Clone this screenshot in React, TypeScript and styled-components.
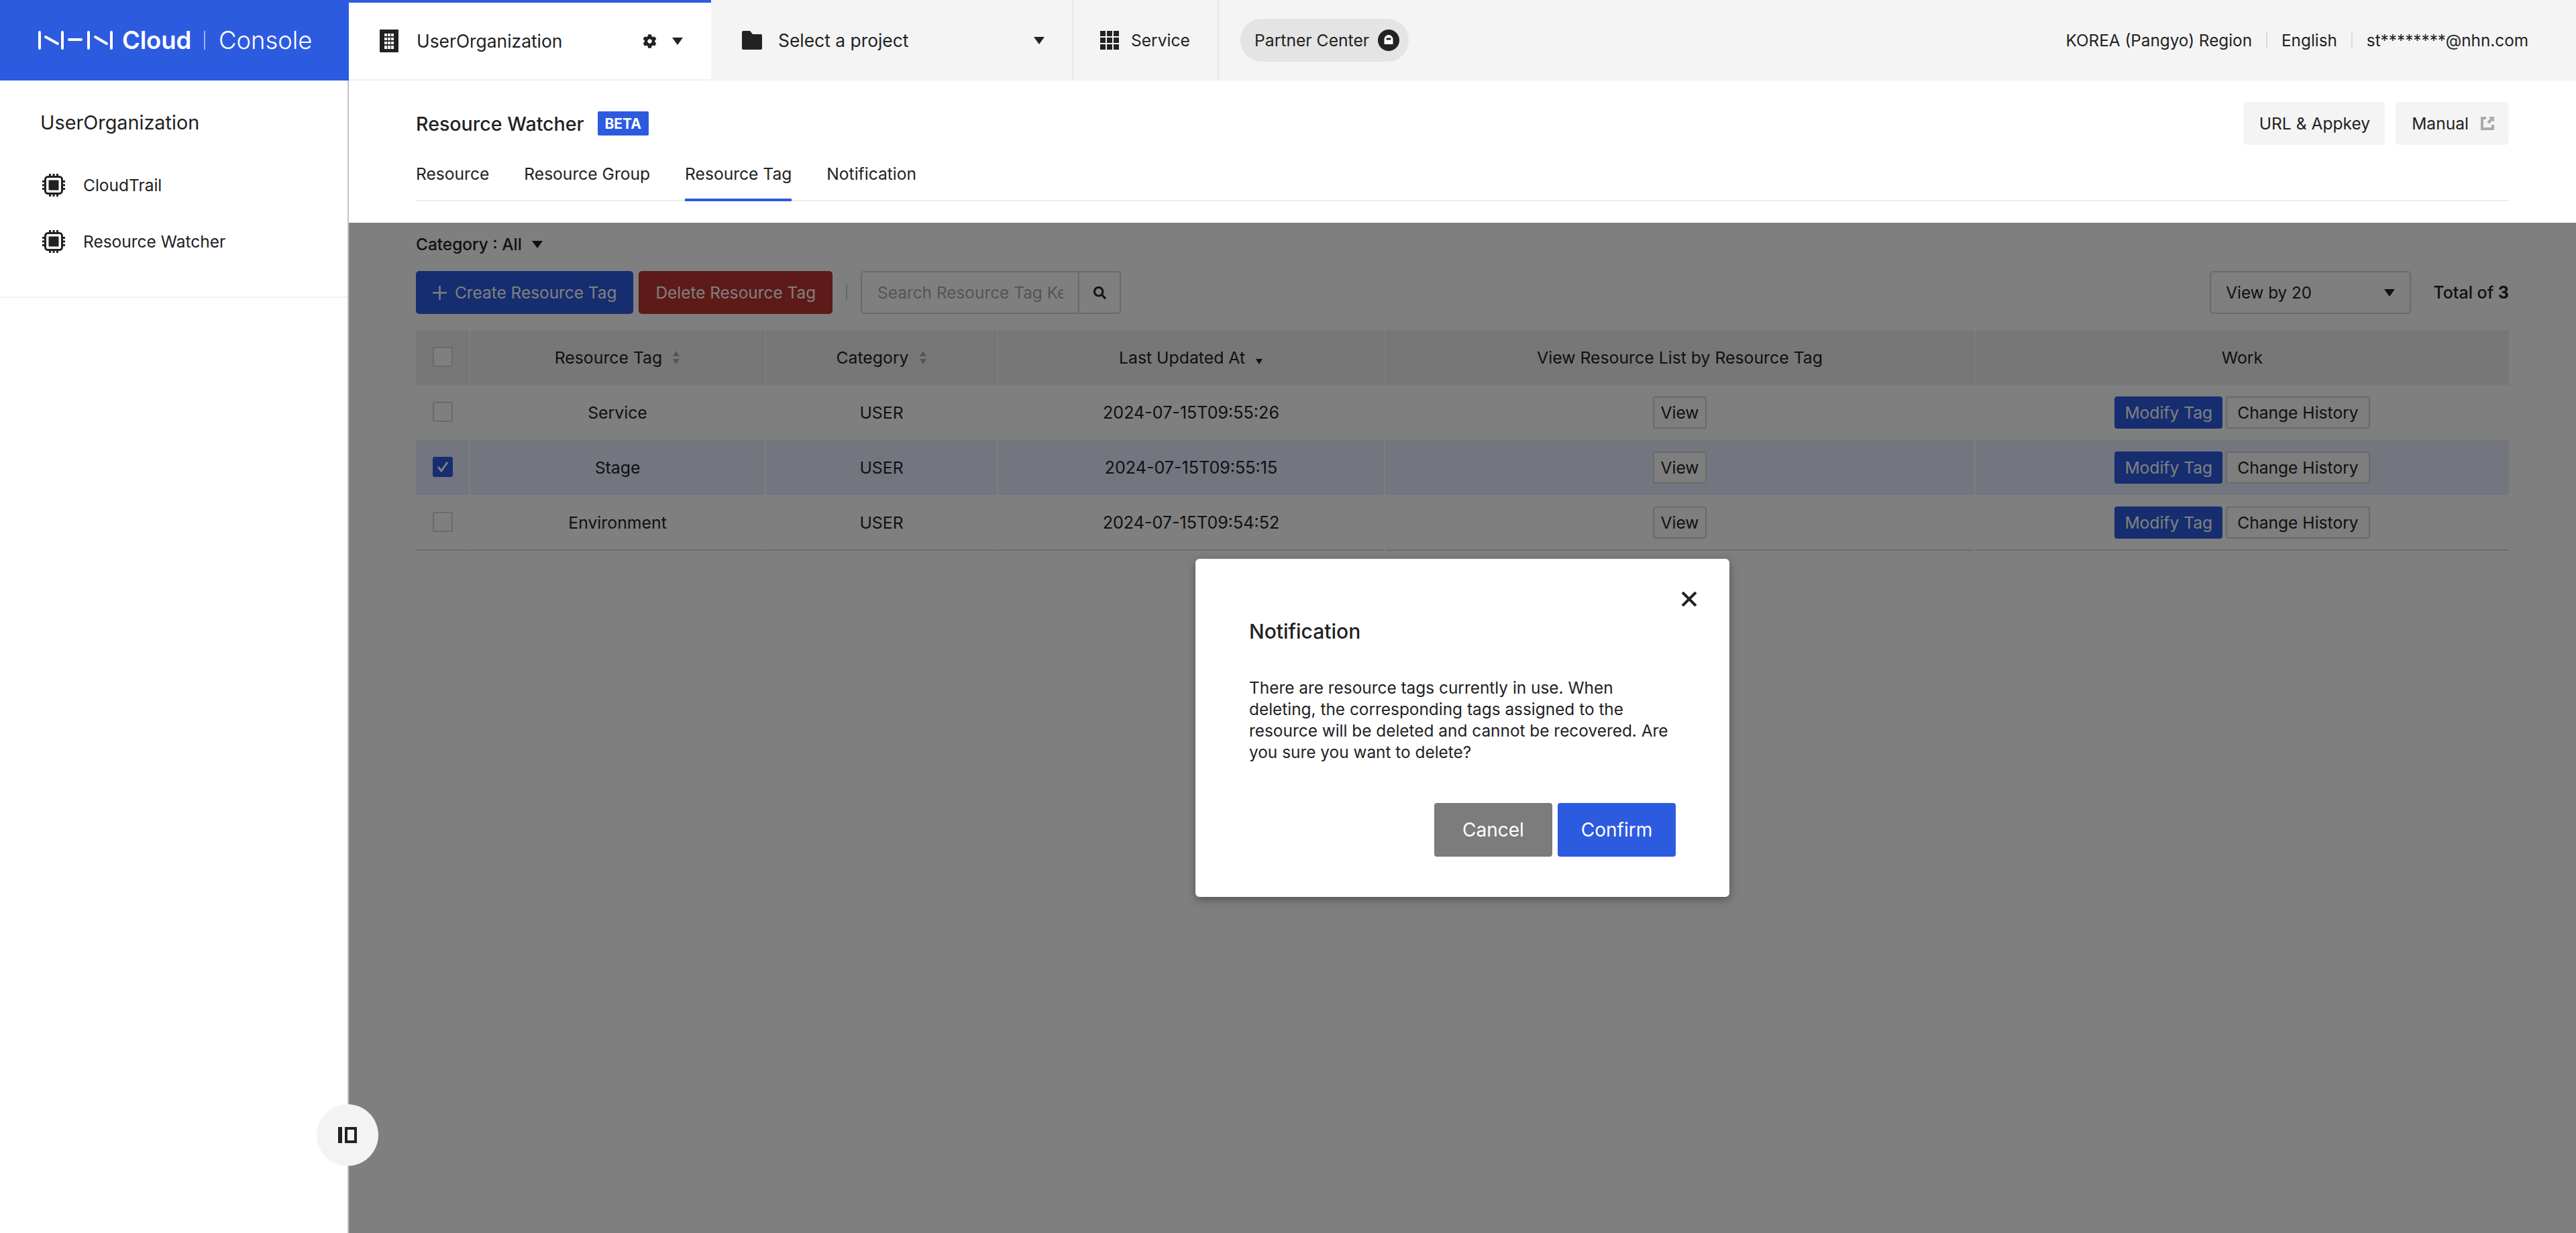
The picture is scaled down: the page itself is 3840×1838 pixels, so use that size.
import React from 'react';
import styled, { createGlobalStyle } from 'styled-components';
import { FaCog, FaSearch } from 'react-icons/fa';

const Global = createGlobalStyle`
  html, body { margin: 0; padding: 0; background: #fff; }
  body { font-family: Inter, "Noto Sans", "Liberation Sans", sans-serif; color: #222; font-size: 24.2px; }
  * { box-sizing: border-box; }
  button, input { font-family: inherit; }
`;

const Page = styled.div`
  width: 3840px;
  height: 1838px;
  overflow: hidden;
  display: flex;
  flex-direction: column;
`;

/* ---------- top bar ---------- */
const TopBar = styled.header`
  height: 120px;
  flex: none;
  display: flex;
  background: #f4f4f4;
`;

const Logo = styled.div`
  width: 520px;
  background: #2d5be0;
  color: #fff;
  display: flex;
  align-items: center;
  padding-left: 57px;
`;

const LogoBold = styled.span`
  font-weight: 600;
  margin-left: 13px;
  font-size: 36.6px;
  letter-spacing: -0.2px;
`;

const LogoBar = styled.i`
  width: 2px;
  height: 28px;
  background: rgba(255, 255, 255, 0.55);
  margin: 0 20px 0 19px;
`;

const LogoLight = styled.span`
  font-weight: 300;
  font-size: 36.4px;
`;

const OrgTab = styled.div`
  width: 540px;
  background: #fff;
  border-top: 4px solid #2d5be0;
  border-bottom: 2px solid #f0f0f0;
  display: flex;
  align-items: center;
  padding: 0 42px 0 46px;
`;

const ProjectTab = styled.div`
  width: 540px;
  display: flex;
  align-items: center;
  padding: 0 41px 0 46px;
  border-right: 2px solid #e6e6e6;
`;

const ServiceTab = styled.div`
  width: 217px;
  display: flex;
  align-items: center;
  padding-left: 40px;
  border-right: 2px solid #e6e6e6;
`;

const TabLabel = styled.span<{ $gap: number; $size?: number }>`
  margin-left: ${p => p.$gap}px;
  flex: 1;
  white-space: nowrap;
  font-size: ${p => p.$size ?? 24.2}px;
`;

const GearWrap = styled.span`
  display: flex;
  margin-right: 23px;
  color: #222;
`;

const Pill = styled.div`
  margin-left: 32px;
  align-self: center;
  width: 251px;
  height: 64px;
  border-radius: 32px;
  background: #e4e4e4;
  display: flex;
  align-items: center;
  padding-left: 21px;
  gap: 13px;
  white-space: nowrap;
  font-size: 24.7px;
`;

const TopRight = styled.div`
  margin-left: auto;
  padding-right: 71px;
  display: flex;
  align-items: center;
  white-space: nowrap;
  font-size: 24.3px;
`;

const TopSep = styled.i`
  width: 2px;
  height: 24px;
  background: #dcdcdc;
  margin: 0 21px;
`;

const Caret = styled.i`
  display: inline-block;
  flex: none;
  width: 0;
  height: 0;
  border-left: 8px solid transparent;
  border-right: 8px solid transparent;
  border-top: 11px solid #222;
`;

/* ---------- body ---------- */
const Body = styled.div`
  flex: 1;
  display: flex;
  min-height: 0;
`;

const Sidebar = styled.aside`
  width: 520px;
  flex: none;
  background: #fff;
  border-right: 2px solid #c4c4c4;
  position: relative;
`;

const SideBlock = styled.div`
  height: 324px;
  padding: 43px 0 0 60px;
  border-bottom: 2px solid #f0f0f0;
`;

const SideTitle = styled.div`
  font-size: 28.8px;
  line-height: 40px;
`;

const SideList = styled.ul`
  list-style: none;
  margin: 31px 0 0;
  padding: 0;
  display: flex;
  flex-direction: column;
`;

const SideItem = styled.li`
  height: 84px;
  display: flex;
  align-items: center;
  gap: 27px;
  padding-left: 3px;
  font-size: 24.5px;
`;

const Collapse = styled.button`
  position: absolute;
  z-index: 5;
  left: 472px;
  top: 1526px;
  width: 92px;
  height: 92px;
  border: 0;
  border-radius: 50%;
  background: #f3f3f3;
  display: flex;
  align-items: center;
  justify-content: center;
  padding: 0;
`;

const Main = styled.main`
  flex: 1;
  min-width: 0;
  position: relative;
  display: flex;
  flex-direction: column;
`;

const Head = styled.div`
  height: 212px;
  flex: none;
  padding: 32px 100px 0;
`;

const TitleRow = styled.div`
  height: 64px;
  display: flex;
  align-items: center;
`;

const Title = styled.h1`
  margin: 0;
  font-size: 28.6px;
  font-weight: 500;
`;

const Beta = styled.span`
  margin-left: 20px;
  width: 76px;
  height: 36px;
  background: #2d5be0;
  color: #fff;
  border-radius: 2px;
  font-size: 21px;
  font-weight: 700;
  display: flex;
  align-items: center;
  justify-content: center;
`;

const HeadButtons = styled.div`
  margin-left: auto;
  display: flex;
  gap: 16px;
`;

const HeadButton = styled.button`
  height: 64px;
  border: 0;
  border-radius: 5px;
  background: #f4f4f4;
  color: #222;
  font-size: 24.6px;
  padding: 0 22px 0 24px;
  display: flex;
  align-items: center;
  gap: 18px;
  white-space: nowrap;
`;

const Tabs = styled.nav`
  margin-top: 6px;
  height: 78px;
  display: flex;
  gap: 52px;
  box-shadow: inset 0 -2px 0 #eee;
`;

const Tab = styled.a<{ $active?: boolean }>`
  height: 78px;
  line-height: 74px;
  font-size: 24.6px;
  border-bottom: 4px solid ${p => (p.$active ? '#2d5be0' : 'transparent')};
  white-space: nowrap;
`;

const Content = styled.div`
  flex: 1;
  padding: 14px 100px 0;
`;

const Filter = styled.div`
  height: 36px;
  display: flex;
  align-items: center;
  gap: 15px;
  font-weight: 500;
  font-size: 24.4px;
`;

const Toolbar = styled.div`
  margin-top: 22px;
  height: 64px;
  display: flex;
  align-items: center;
`;

const Solid = styled.button<{ $color: string }>`
  height: 64px;
  border: 0;
  border-radius: 5px;
  background: ${p => p.$color};
  color: #fff;
  font-size: 24.4px;
  padding: 0 25px;
  margin-right: 8px;
  display: flex;
  align-items: center;
  gap: 12px;
  white-space: nowrap;
`;

const ToolSep = styled.i`
  width: 2px;
  height: 24px;
  background: #ccc;
  margin: 0 20px 0 12px;
`;

const Search = styled.div`
  width: 388px;
  height: 64px;
  border: 2px solid #d4d4d4;
  border-radius: 5px;
  display: flex;
`;

const SearchInput = styled.input`
  flex: 1;
  min-width: 0;
  border: 0;
  outline: 0;
  background: transparent;
  font-size: 24.4px;
  padding: 0 22px 0 23px;
  &::placeholder { color: #aaa; opacity: 1; }
`;

const SearchButton = styled.span`
  width: 62px;
  flex: none;
  border-left: 2px solid #d4d4d4;
  display: flex;
  align-items: center;
  justify-content: center;
  color: #222;
`;

const ViewBy = styled.div`
  margin-left: auto;
  width: 300px;
  height: 64px;
  border: 2px solid #d4d4d4;
  border-radius: 5px;
  display: flex;
  align-items: center;
  justify-content: space-between;
  padding: 0 22px;
`;

const Total = styled.div`
  margin-left: 33px;
  white-space: nowrap;
  font-weight: 500;
  font-size: 25px;
  b { font-weight: 700; }
`;

const Table = styled.table`
  margin-top: 24px;
  width: 100%;
  table-layout: fixed;
  border-collapse: collapse;
  border-bottom: 2px solid #d8d8d8;
`;

const Th = styled.th`
  height: 82px;
  padding: 0;
  background: #eee;
  font-weight: 400;
  font-size: 24.8px;
  text-align: center;
  border-left: 2px solid #fafafa;
  &:first-child { border-left: 0; }
`;

const Tr = styled.tr<{ $selected?: boolean }>`
  background: ${p => (p.$selected ? '#e6ecfe' : '#fff')};
`;

const Td = styled.td`
  height: 82px;
  padding: 0;
  text-align: center;
  font-size: 24.8px;
  border-left: 2px solid #fff;
  &:first-child { border-left: 0; }
`;

const DateTd = styled(Td)`
  font-size: 25.1px;
`;

const Check = styled.span<{ $on?: boolean }>`
  display: flex;
  align-items: center;
  justify-content: center;
  width: 30px;
  height: 30px;
  margin: 0 auto 2px;
  border-radius: 3px;
  border: 2px solid ${p => (p.$on ? '#2d5be0' : '#d4d4d4')};
  background: ${p => (p.$on ? '#2d5be0' : '#fff')};
`;

const HeadInner = styled.span`
  display: inline-flex;
  align-items: center;
  gap: 15px;
`;

const RowButtons = styled.span`
  display: inline-flex;
  gap: 5px;
`;

const Small = styled.button<{ $primary?: boolean }>`
  height: 48px;
  border-radius: 4px;
  border: ${p => (p.$primary ? '0' : '2px solid #d4d4d4')};
  background: ${p => (p.$primary ? '#2d5be0' : '#fdfdfd')};
  color: ${p => (p.$primary ? '#fff' : '#222')};
  font-size: 24.6px;
  padding: 0 15px;
  white-space: nowrap;
`;

const ViewButton = styled(Small)`
  padding: 0 10px;
`;

/* ---------- dimmed layer and dialog ---------- */
const Overlay = styled.div`
  position: absolute;
  left: 0;
  right: 0;
  top: 212px;
  bottom: 0;
  background: rgba(0, 0, 0, 0.5);
  display: flex;
  align-items: center;
  justify-content: center;
`;

const Dialog = styled.div`
  width: 796px;
  height: 504px;
  background: #fff;
  border-radius: 6px;
  box-shadow: 0 4px 14px rgba(0, 0, 0, 0.35);
  padding: 84px 80px 60px;
  position: relative;
  display: flex;
  flex-direction: column;
`;

const Close = styled.span`
  position: absolute;
  right: 48px;
  top: 49px;
  width: 24px;
  height: 22px;
  display: flex;
`;

const DialogTitle = styled.h2`
  margin: 0;
  font-size: 30px;
  line-height: 48px;
  font-weight: 500;
`;

const DialogText = styled.p`
  margin: 44px 0 0;
  font-size: 24.4px;
  line-height: 32px;
`;

const DialogButtons = styled.div`
  margin-top: auto;
  display: flex;
  justify-content: flex-end;
  gap: 8px;
`;

const DialogButton = styled.button<{ $color: string }>`
  width: 176px;
  height: 80px;
  border: 0;
  border-radius: 4px;
  background: ${p => p.$color};
  color: #fff;
  font-size: 28px;
`;

/* ---------- drawings ---------- */
const NhnMark = () => (
  <svg width="112" height="28" viewBox="0 0 112 28" fill="none" stroke="#fff" strokeWidth="4" strokeLinecap="round">
    <path d="M2 2v24M11 9l18 10M36 2v24M46 13h18M75 2v24M85 9l17 10M109 2v24" />
  </svg>
);

const Chip = () => (
  <svg width="34" height="34" viewBox="0 0 34 34" fill="#222">
    <path d="M10 0h3v5h-3zM15.500 0h3v5h-3zM21 0h3v5h-3zM10 29h3v5h-3zM15.500 29h3v5h-3zM21 29h3v5h-3zM0 10h5v3H0zM0 15.500h5v3H0zM0 21h5v3H0zM29 10h5v3h-5zM29 15.500h5v3h-5zM29 21h5v3h-5z" />
    <rect x="4.500" y="4.500" width="25" height="25" rx="4" fill="#fff" stroke="#222" strokeWidth="3" />
    <rect x="9.500" y="9.500" width="15" height="15" rx="1" />
  </svg>
);

const Building = () => (
  <svg width="28" height="34" viewBox="0 0 28 34">
    <rect width="28" height="34" rx="1" fill="#222" />
    <path d="M7 6h4v4H7zM12 6h4v4h-4zM17 6h4v4h-4zM7 12h4v4H7zM12 12h4v4h-4zM17 12h4v4h-4zM7 18h4v4H7zM12 18h4v4h-4zM17 18h4v4h-4zM7 24h4v5H7zM12 24h4v5h-4zM17 24h4v5h-4z" fill="#fff" />
  </svg>
);

const Folder = () => (
  <svg width="30" height="28" viewBox="0 0 30 28" fill="#222">
    <path d="M2 0h10l4 5h12a2 2 0 0 1 2 2v19a2 2 0 0 1-2 2H2a2 2 0 0 1-2-2V2a2 2 0 0 1 2-2z" />
  </svg>
);

const Grid = () => (
  <svg width="28" height="28" viewBox="0 0 28 28" fill="#222">
    <path d="M0 0h8v8H0zM10 0h8v8h-8zM20 0h8v8h-8zM0 10h8v8H0zM10 10h8v8h-8zM20 10h8v8h-8zM0 20h8v8H0zM10 20h8v8h-8zM20 20h8v8h-8z" />
  </svg>
);

const LockBadge = () => (
  <svg width="32" height="32" viewBox="0 0 32 32" style={{ flex: 'none' }}>
    <circle cx="16" cy="16" r="16" fill="#222" />
    <path d="M9.500 22v-7.500a6.500 6.500 0 0 1 13 0V22z" fill="#fff" />
    <rect x="12.500" y="12.500" width="7" height="3" rx="1" fill="#222" />
  </svg>
);

const External = () => (
  <svg width="20" height="20" viewBox="0 0 20 20" fill="#aaa">
    <path d="M0 0h8v4H4v12h12v-4h4v8H0z" />
    <path d="M12 0h8v8l-2.500-2.500-5 5-3-3 5-5z" />
  </svg>
);

const Plus = () => (
  <svg width="21" height="21" viewBox="0 0 20 20" fill="#fff">
    <path d="M8.800 0h2.400v8.800H20v2.400h-8.800V20H8.800v-8.800H0V8.800h8.800z" />
  </svg>
);

const Sort = ({ active }: { active?: boolean }) => (
  <svg width="12" height="20" viewBox="0 0 12 20">
    {!active && <path d="M6 0l5 8H1z" fill="#aaa" />}
    <path d="M6 20l5-8H1z" fill={active ? '#222' : '#aaa'} />
  </svg>
);

const Tick = () => (
  <svg width="18" height="16" viewBox="0 0 18 16" fill="none" stroke="#fff" strokeWidth="3">
    <path d="M2 8l5 6 9-13" />
  </svg>
);

const CloseIcon = () => (
  <svg width="24" height="22" viewBox="0 0 24 22" fill="none" stroke="#222" strokeWidth="4">
    <path d="M2 1l20 20M22 1L2 21" />
  </svg>
);

const PanelIcon = () => (
  <svg width="28" height="24" viewBox="0 0 28 24" fill="#222">
    <path d="M0 0h6v24H0zM10 0h18v24H10zM14 4v16h10V4z" fillRule="evenodd" />
  </svg>
);

const rows = [
  { tag: 'Service', updated: '2024-07-15T09:55:26' },
  { tag: 'Stage', updated: '2024-07-15T09:55:15', selected: true },
  { tag: 'Environment', updated: '2024-07-15T09:54:52' },
];

export default function App() {
  return (
    <Page>
      <Global />
      <TopBar>
        <Logo>
          <NhnMark />
          <LogoBold>Cloud</LogoBold>
          <LogoBar />
          <LogoLight>Console</LogoLight>
        </Logo>
        <OrgTab>
          <Building />
          <TabLabel $gap={27} $size={26.4}>UserOrganization</TabLabel>
          <GearWrap><FaCog size={21} /></GearWrap>
          <Caret />
        </OrgTab>
        <ProjectTab>
          <Folder />
          <TabLabel $gap={24} $size={26.4}>Select a project</TabLabel>
          <Caret />
        </ProjectTab>
        <ServiceTab>
          <Grid />
          <TabLabel $gap={18} $size={24.6}>Service</TabLabel>
        </ServiceTab>
        <Pill>
          Partner Center
          <LockBadge />
        </Pill>
        <TopRight>
          KOREA (Pangyo) Region
          <TopSep />
          English
          <TopSep />
          st********@nhn.com
        </TopRight>
      </TopBar>
      <Body>
        <Sidebar>
          <SideBlock>
            <SideTitle>UserOrganization</SideTitle>
            <SideList>
              <SideItem><Chip />CloudTrail</SideItem>
              <SideItem><Chip />Resource Watcher</SideItem>
            </SideList>
          </SideBlock>
          <Collapse><PanelIcon /></Collapse>
        </Sidebar>
        <Main>
          <Head>
            <TitleRow>
              <Title>Resource Watcher</Title>
              <Beta>BETA</Beta>
              <HeadButtons>
                <HeadButton>URL &amp; Appkey</HeadButton>
                <HeadButton>Manual <External /></HeadButton>
              </HeadButtons>
            </TitleRow>
            <Tabs>
              <Tab>Resource</Tab>
              <Tab>Resource Group</Tab>
              <Tab $active>Resource Tag</Tab>
              <Tab>Notification</Tab>
            </Tabs>
          </Head>
          <Content>
            <Filter>Category : All <Caret /></Filter>
            <Toolbar>
              <Solid $color="#2d5be0"><Plus />Create Resource Tag</Solid>
              <Solid $color="#bc3430">Delete Resource Tag</Solid>
              <ToolSep />
              <Search>
                <SearchInput placeholder="Search Resource Tag Key" readOnly />
                <SearchButton><FaSearch size={19} /></SearchButton>
              </Search>
              <ViewBy>View by 20 <Caret /></ViewBy>
              <Total>Total of <b>3</b></Total>
            </Toolbar>
            <Table>
              <colgroup>
                <col width="80" />
                <col width="441" />
                <col width="346" />
                <col width="577" />
                <col width="880" />
                <col width="796" />
              </colgroup>
              <thead>
                <tr>
                  <Th><Check /></Th>
                  <Th><HeadInner>Resource Tag <Sort /></HeadInner></Th>
                  <Th><HeadInner>Category <Sort /></HeadInner></Th>
                  <Th><HeadInner>Last Updated At <Sort active /></HeadInner></Th>
                  <Th>View Resource List by Resource Tag</Th>
                  <Th>Work</Th>
                </tr>
              </thead>
              <tbody>
                {rows.map(r => (
                  <Tr key={r.tag} $selected={r.selected}>
                    <Td><Check $on={r.selected}>{r.selected && <Tick />}</Check></Td>
                    <Td>{r.tag}</Td>
                    <Td>USER</Td>
                    <DateTd>{r.updated}</DateTd>
                    <Td><ViewButton>View</ViewButton></Td>
                    <Td>
                      <RowButtons>
                        <Small $primary>Modify Tag</Small>
                        <Small>Change History</Small>
                      </RowButtons>
                    </Td>
                  </Tr>
                ))}
              </tbody>
            </Table>
          </Content>
          <Overlay>
            <Dialog>
              <Close><CloseIcon /></Close>
              <DialogTitle>Notification</DialogTitle>
              <DialogText>
                There are resource tags currently in use. When deleting, the corresponding tags assigned to the
                resource will be deleted and cannot be recovered. Are you sure you want to delete?
              </DialogText>
              <DialogButtons>
                <DialogButton $color="#7c7c7c">Cancel</DialogButton>
                <DialogButton $color="#2d5be0">Confirm</DialogButton>
              </DialogButtons>
            </Dialog>
          </Overlay>
        </Main>
      </Body>
    </Page>
  );
}
